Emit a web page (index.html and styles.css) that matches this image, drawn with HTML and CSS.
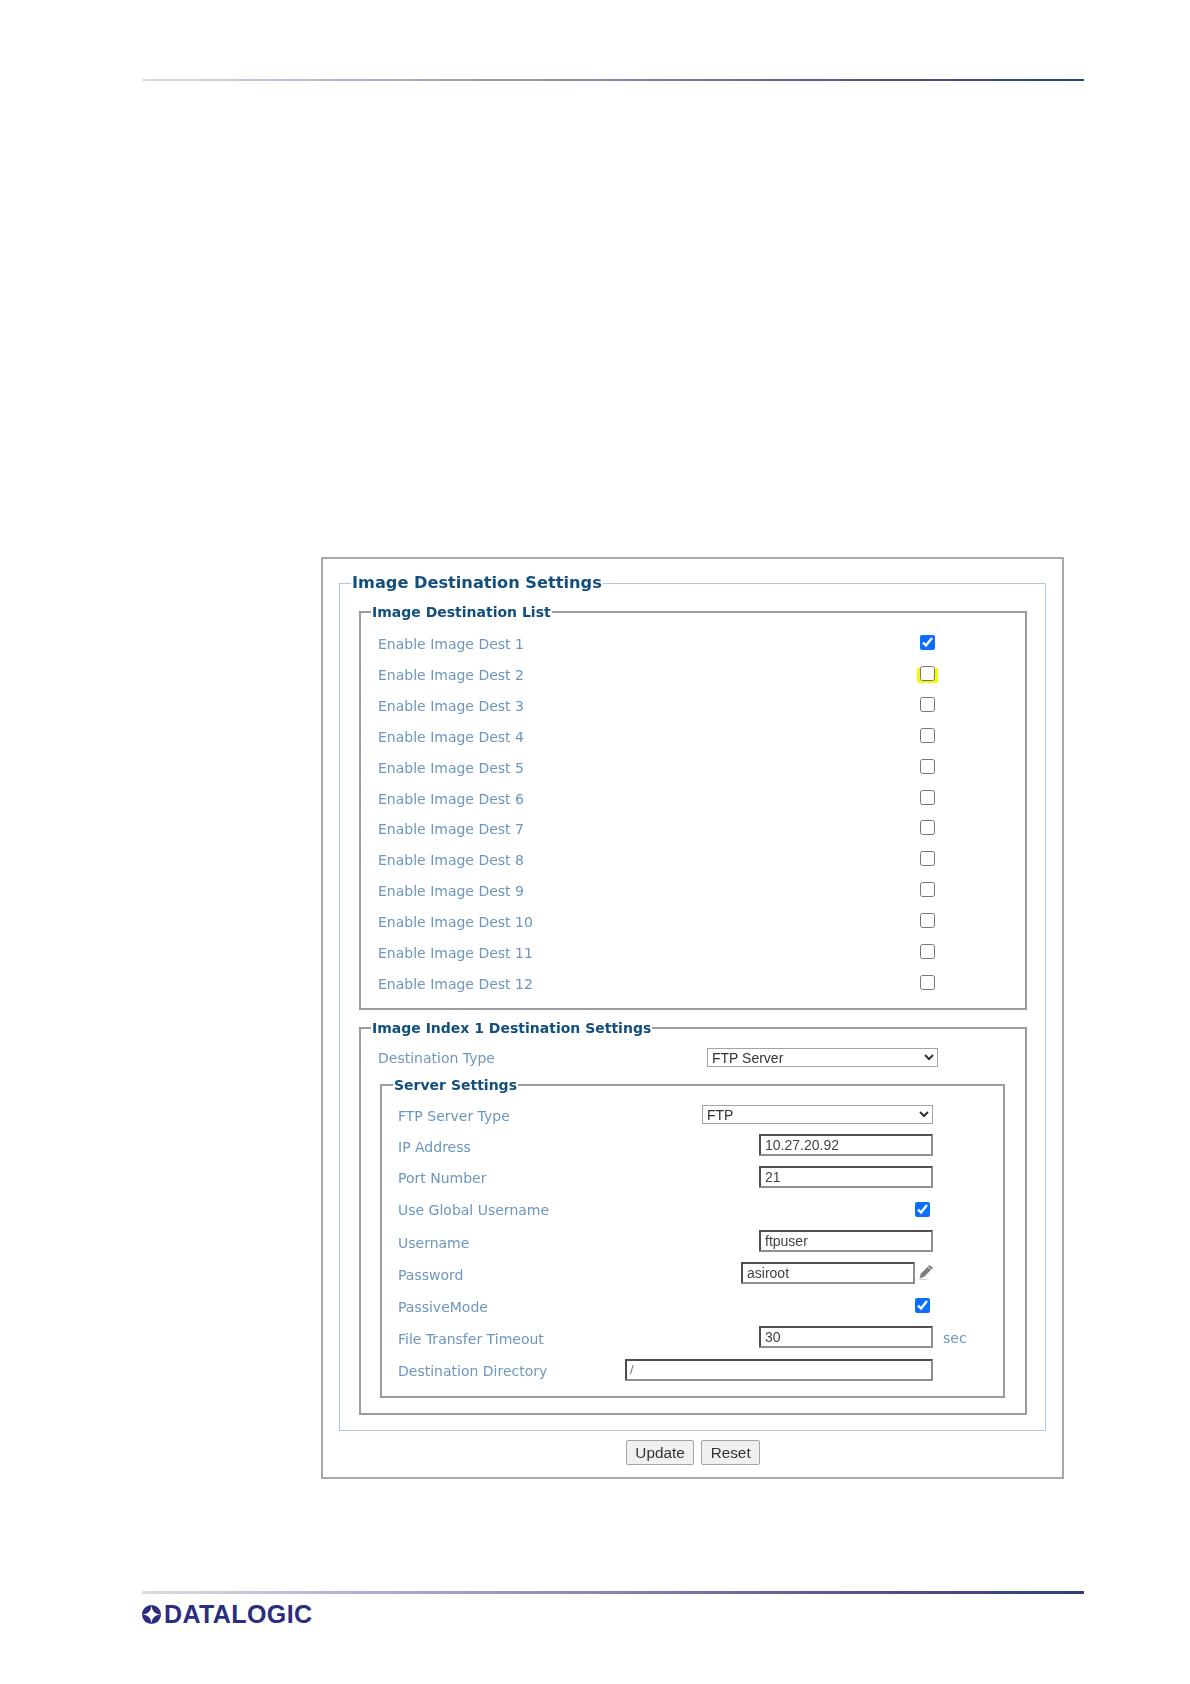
FILE: index.html
```html
<!DOCTYPE html>
<html lang="en">
<head>
<meta charset="utf-8">
<title>Image Destination Settings</title>
<link rel="stylesheet" href="styles.css">
</head>
<body>
<div class="page">
  <div class="rule"></div>
  <main class="panel">
    <fieldset class="group-outer">
      <legend class="legend-main">Image Destination Settings</legend>
      <fieldset class="group list-group">
        <legend class="legend-sub">Image Destination List</legend>
        <div class="list-row"><label>Enable Image Dest 1</label><input type="checkbox" checked></div>
        <div class="list-row"><label>Enable Image Dest 2</label><span class="marker"><input type="checkbox"></span></div>
        <div class="list-row"><label>Enable Image Dest 3</label><input type="checkbox"></div>
        <div class="list-row"><label>Enable Image Dest 4</label><input type="checkbox"></div>
        <div class="list-row"><label>Enable Image Dest 5</label><input type="checkbox"></div>
        <div class="list-row"><label>Enable Image Dest 6</label><input type="checkbox"></div>
        <div class="list-row"><label>Enable Image Dest 7</label><input type="checkbox"></div>
        <div class="list-row"><label>Enable Image Dest 8</label><input type="checkbox"></div>
        <div class="list-row"><label>Enable Image Dest 9</label><input type="checkbox"></div>
        <div class="list-row"><label>Enable Image Dest 10</label><input type="checkbox"></div>
        <div class="list-row"><label>Enable Image Dest 11</label><input type="checkbox"></div>
        <div class="list-row"><label>Enable Image Dest 12</label><input type="checkbox"></div>
      </fieldset>
      <fieldset class="group index-group">
        <legend class="legend-sub">Image Index 1 Destination Settings</legend>
        <div class="type-row">
          <label>Destination Type</label>
          <select class="select"><option>FTP Server</option></select>
        </div>
        <fieldset class="group server-group">
          <legend class="legend-sub legend-server">Server Settings</legend>
          <div class="form-row h31"><label>FTP Server Type</label><select class="select"><option>FTP</option></select></div>
          <div class="form-row h31"><label>IP Address</label><input class="text" type="text" value="10.27.20.92"></div>
          <div class="form-row h32"><label>Port Number</label><input class="text" type="text" value="21"></div>
          <div class="form-row h32"><label>Use Global Username</label><input class="check-end" type="checkbox" checked></div>
          <div class="form-row h33"><label>Username</label><input class="text" type="text" value="ftpuser"></div>
          <div class="form-row h32"><label>Password</label>
            <div class="password">
              <input class="text" type="text" value="asiroot">
              <svg class="pencil" viewBox="0 0 16 16" width="16" height="16" aria-hidden="true">
                <path d="M11.6 1 15 4 6.2 12.8 1.6 14.6 2.8 9.8Z" fill="#7d7d7d"/>
                <path d="M10.2 3 13 5.6" stroke="#fff" stroke-width=".9" fill="none"/>
                <path d="M1 15.4H9" stroke="#c8c8c8" stroke-width=".9"/>
              </svg>
            </div>
          </div>
          <div class="form-row h31"><label>PassiveMode</label><input class="check-end" type="checkbox" checked></div>
          <div class="form-row h33"><label>File Transfer Timeout</label><input class="text" type="text" value="30"><span class="suffix">sec</span></div>
          <div class="form-row h32"><label>Destination Directory</label><input class="text wide" type="text" value="/"></div>
        </fieldset>
      </fieldset>
    </fieldset>
    <div class="actions">
      <button type="button">Update</button>
      <button type="button">Reset</button>
    </div>
  </main>
  <footer class="footer">
    <div class="rule rule-thick"></div>
    <div class="logo">
      <svg viewBox="0 0 18 18" width="19" height="19" aria-hidden="true">
        <circle cx="9" cy="9" r="9" fill="#2b2d7e"/>
        <path d="M9 0C9.2 5.6 12.4 8.8 18 9 12.4 9.2 9.2 12.4 9 18 8.8 12.4 5.6 9.2 0 9 5.6 8.8 8.8 5.6 9 0Z" fill="#fff"/>
      </svg>
      <span class="wordmark">DATALOGIC</span>
    </div>
  </footer>
</div>
</body>
</html>
```

FILE: styles.css
```css
* { box-sizing: border-box; }
html, body { margin: 0; padding: 0; background: #fff; }
body { font-family: "DejaVu Sans", sans-serif; }

.page {
  width: 1190px;
  height: 1684px;
  padding: 79px 106px 0 142px;
}
.rule {
  height: 2px;
  background: linear-gradient(90deg, #dcdcdc 0%, #b9b3d6 20%, #8b83ad 50%, #5a5390 75%, #2c3f7c 100%);
}
.rule-thick { height: 3px; }

.panel {
  width: 743px;
  height: 922px;
  margin: 476px 0 0 179px;
  padding: 12px 16px 0 16px;
  border: 2px solid #a9a9a9;
  filter: blur(.35px);
}

fieldset { margin: 0; min-width: 0; }
legend { padding: 0 1px; font-weight: bold; color: #134f7c; white-space: nowrap; }

.group-outer {
  height: 860px;
  padding: 8px 18px 0 19px;
  border: 1px solid #a6cbea;
}
.legend-main { margin-left: -8px; font-size: 16.2px; line-height: 24px; }
.legend-sub { font-size: 14px; line-height: 18px; margin-left: -7px; }
.legend-server { margin-left: -5px; }

.group { border: 2px solid #9c9c9c; }
.list-group { height: 407px; padding: 8px 0 0 17px; }
.index-group { height: 396px; margin-top: 9px; padding: 5px 20px 0 17px; }
.server-group { height: 322px; margin: 4px 0 0 2px; padding: 5px 0 0 16px; }

label { font-size: 14px; color: #6d96bd; }

.list-row {
  display: flex;
  align-items: center;
  justify-content: space-between;
  height: 30.85px;
  padding-right: 90px;
}
input[type="checkbox"] { width: 15px; height: 15px; margin: 0; accent-color: #0d6efd; }
.list-row > input[type="checkbox"] { margin-bottom: 3px; }
.marker {
  display: flex;
  justify-content: center;
  width: 21px;
  margin-right: -3px;
  margin-bottom: 1px;
  padding-bottom: 2px;
  background: linear-gradient(transparent 2px, #f8f800 2px);
  border-radius: 2px;
}
.marker input { background: #fff; }

.type-row {
  display: flex;
  align-items: center;
  justify-content: space-between;
  height: 30px;
  padding-right: 67px;
}
.type-row > label { padding-top: 2px; }
.select {
  width: 231px;
  height: 19px;
  padding: 0;
  border: 1px solid #a4a4a4;
  border-radius: 0;
  background-color: #fff;
  font: 14px "Liberation Sans", sans-serif;
  color: #333;
}

.form-row {
  display: grid;
  grid-template-columns: 1fr auto 70px;
  align-items: center;
  column-gap: 0;
}
.h31 { height: 31px; }
.h32 { height: 32px; }
.h33 { height: 33px; }
.form-row > label { padding-top: 2px; grid-column: 1; }

.text {
  width: 174px;
  height: 22px;
  margin-bottom: 1px;
  padding: 0 4px;
  border: 2px solid;
  border-color: #4d4d4d #8f8f8f #8f8f8f #4d4d4d;
  border-radius: 1px;
  background: #fff;
  font: 14px "Liberation Sans", sans-serif;
  color: #444;
  outline: none;
}
.wide { width: 308px; padding-left: 3px; font-size: 13px; color: #777; }
.form-row > .select, .form-row > .text, .form-row > .password { grid-column: 2; justify-self: end; }
.form-row > .check-end { grid-column: 2; justify-self: end; margin-right: 3px; }

.password { display: flex; align-items: center; gap: 3px; padding-bottom: 1px; margin-right: -1px; }
.pencil { margin-top: -4px; }

.suffix { grid-column: 3; padding-left: 10px; font-size: 14px; color: #6d96bd; }

.actions {
  display: flex;
  justify-content: center;
  gap: 7px;
  margin-top: 9px;
  padding-left: 1px;
}
button {
  height: 25px;
  padding: 0 8.5px;
  border: 1px solid #a4a4a4;
  border-radius: 2px;
  background: #f0f0f0;
  font: 15.3px "Liberation Sans", sans-serif;
  color: #333;
}

.footer { margin-top: 112px; }
.logo {
  display: flex;
  align-items: center;
  gap: 3px;
  height: 20px;
  margin-top: 10px;
}
.wordmark {
  font: bold 25px/20px "Liberation Sans", sans-serif;
  letter-spacing: .4px;
  color: #2b2d7e;
}
```
